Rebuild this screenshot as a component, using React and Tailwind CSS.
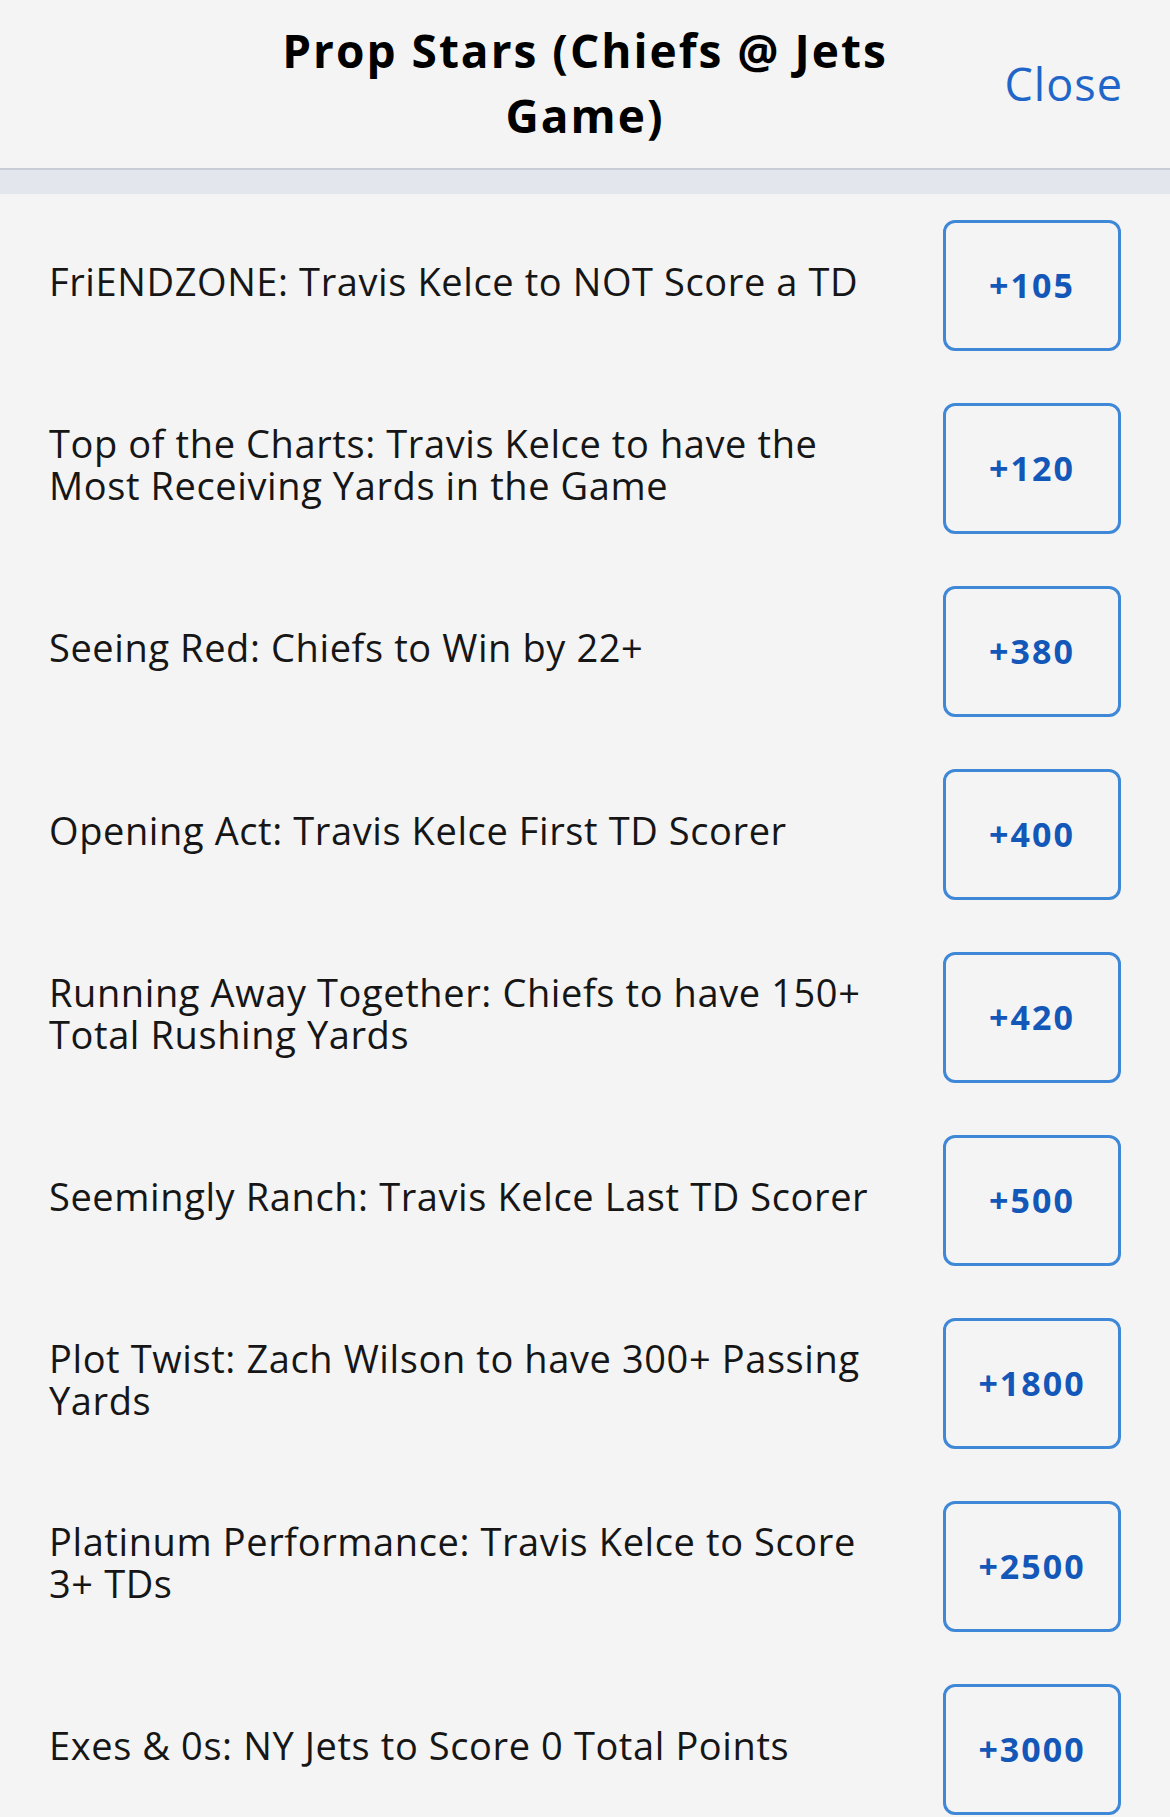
import React from 'react';

const props = [
    { label: 'FriENDZONE: Travis Kelce to NOT Score a TD', odds: '+105' },
    { label: 'Top of the Charts: Travis Kelce to have the Most Receiving Yards in the Game', odds: '+120' },
    { label: 'Seeing Red: Chiefs to Win by 22+', odds: '+380' },
    { label: 'Opening Act: Travis Kelce First TD Scorer', odds: '+400' },
    { label: 'Running Away Together: Chiefs to have 150+ Total Rushing Yards', odds: '+420' },
    { label: 'Seemingly Ranch: Travis Kelce Last TD Scorer', odds: '+500' },
    { label: 'Plot Twist: Zach Wilson to have 300+ Passing Yards', odds: '+1800' },
    { label: 'Platinum Performance: Travis Kelce to Score 3+ TDs', odds: '+2500' },
    { label: 'Exes & 0s: NY Jets to Score 0 Total Points', odds: '+3000' },
];

const App = () => {
    return (
        <div className="w-[1170px] h-[1817px] overflow-hidden bg-[#f4f4f4] text-[#161616]" style={{ fontFamily: '"Open Sans", Lato, sans-serif' }}>
            {/* Header */}
            <div className="h-[170px] flex items-center border-b-2 border-[#c9cdd6]">
                <div className="w-[260px]" />
                <h1 className="flex-1 text-center text-[46px] leading-[65px] tracking-[2px] font-bold text-black -mt-[3px]">
                    Prop Stars (Chiefs @ Jets Game)
                </h1>
                <div className="w-[260px] flex justify-end pr-[47px]">
                    <button className="text-[45px] tracking-[1px] text-[#1f66c8] font-normal">Close</button>
                </div>
            </div>
            <div className="h-[24px] bg-[#e3e6ed]" />

            {/* Prop list */}
            <div className="pl-[49px] pr-[49px]">
                {props.map(p => (
                    <div key={p.odds} className="flex items-center justify-between py-[26px]">
                        <div className="w-[852px] text-[38px] leading-[42px] tracking-[0.6px] -mt-[10px]">
                            {p.label}
                        </div>
                        <button className="w-[178px] h-[131px] flex-shrink-0 rounded-[12px] border-[3px] border-[#3f88d8] text-[#1357b8] text-[34px] font-bold tracking-[2px]">
                            {p.odds}
                        </button>
                    </div>
                ))}
            </div>
        </div>
    );
};

export default App;
